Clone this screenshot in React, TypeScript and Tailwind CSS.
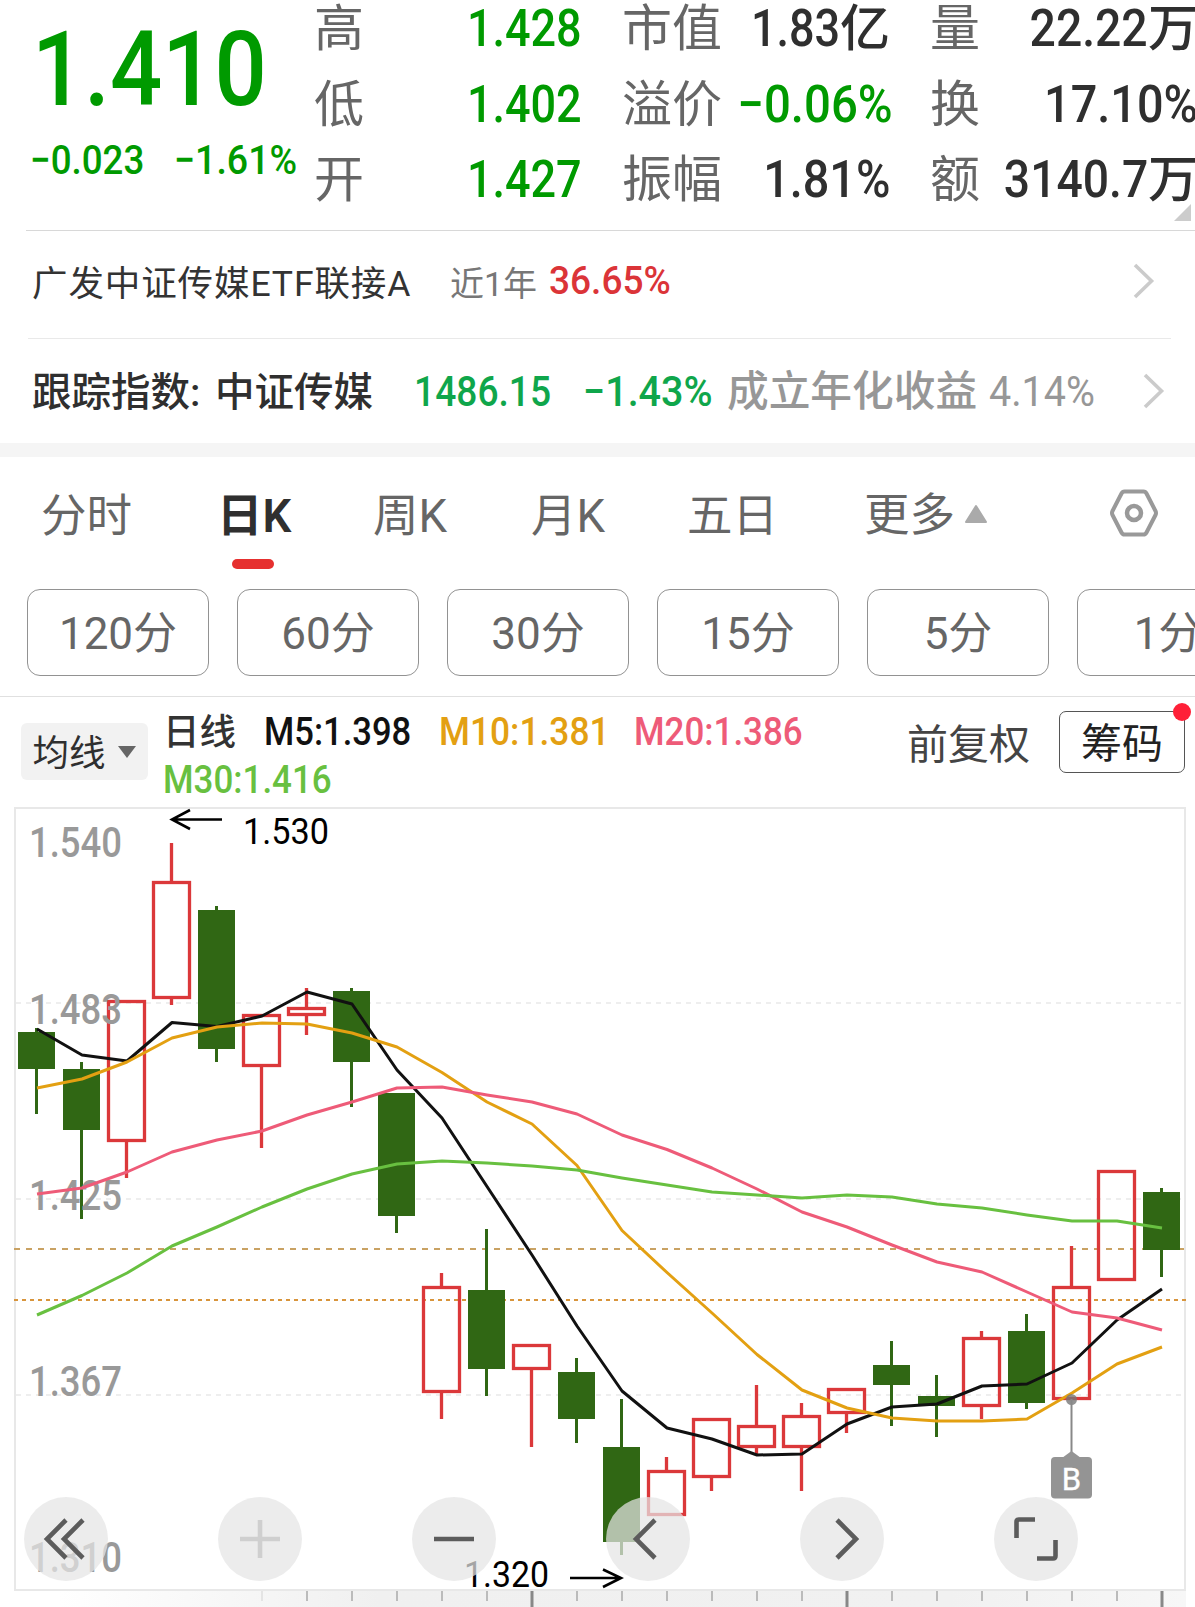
import React from "react";
import { clsx } from "clsx";

const quoteColumns = [
  {
    width: "w-[268px]",
    rows: [
      { label: "高", value: "1.428", color: "text-[#009a00]", scale: "scale-x-[0.865]" },
      { label: "低", value: "1.402", color: "text-[#009a00]", scale: "scale-x-[0.865]" },
      { label: "开", value: "1.427", color: "text-[#009a00]", scale: "scale-x-[0.865]" },
    ],
  },
  {
    width: "w-[268px]",
    rows: [
      { label: "市值", value: "1.83", unit: "亿", color: "text-[#2f2f2f]", scale: "scale-x-[0.865]" },
      { label: "溢价", value: "−0.06%", color: "text-[#009a00]", scale: "scale-x-[0.91]" },
      { label: "振幅", value: "1.81%", color: "text-[#2f2f2f]", scale: "scale-x-[0.9]" },
    ],
  },
  {
    width: "w-[268px]",
    rows: [
      { label: "量", value: "22.22", unit: "万", color: "text-[#2f2f2f]", scale: "scale-x-[0.89]" },
      { label: "换", value: "17.10%", color: "text-[#2f2f2f]", scale: "scale-x-[0.9]" },
      { label: "额", value: "3140.7", unit: "万", color: "text-[#2f2f2f]", scale: "scale-x-[0.89]" },
    ],
  },
];

const tabs = [
  { label: "分时", width: "w-[178px]" },
  { label: "日K", width: "w-[154px]", active: true },
  { label: "周K", width: "w-[158px]" },
  { label: "月K", width: "w-[156px]" },
  { label: "五日", width: "w-[177px]" },
];

const periods = ["120", "60", "30", "15", "5", "1"];

// [up, body top, body bottom, high, low]
const candles: [boolean, number, number, number, number][] = [
  [false, 1032, 1069, 1028, 1114],
  [false, 1069, 1130, 1062, 1219],
  [true, 1000, 1142, 1000, 1178],
  [true, 881, 999, 843, 1005],
  [false, 910, 1049, 906, 1062],
  [true, 1014, 1067, 1014, 1148],
  [true, 1007, 1016, 988, 1035],
  [false, 991, 1062, 988, 1107],
  [false, 1093, 1216, 1093, 1233],
  [true, 1286, 1393, 1273, 1419],
  [false, 1290, 1369, 1229, 1396],
  [true, 1344, 1370, 1344, 1447],
  [false, 1372, 1419, 1358, 1443],
  [false, 1447, 1542, 1399, 1555],
  [true, 1470, 1516, 1457, 1516],
  [true, 1418, 1478, 1418, 1491],
  [true, 1425, 1448, 1385, 1454],
  [true, 1415, 1448, 1403, 1491],
  [true, 1388, 1414, 1388, 1433],
  [false, 1365, 1385, 1341, 1426],
  [false, 1396, 1406, 1375, 1437],
  [true, 1337, 1407, 1331, 1419],
  [false, 1331, 1403, 1314, 1409],
  [true, 1286, 1400, 1246, 1400],
  [true, 1170, 1281, 1170, 1281],
  [false, 1192, 1250, 1188, 1277],
];

const averages = [
  {
    color: "#111111",
    points: [1029, 1055, 1061, 1022.5, 1026.5, 1016, 992, 1004, 1070, 1118, 1186.5, 1255, 1326, 1391, 1428, 1439, 1455, 1454, 1424, 1407, 1404, 1386, 1384, 1363, 1320, 1289],
  },
  {
    color: "#e3a012",
    points: [1088, 1079, 1062, 1038, 1027, 1023, 1024, 1033, 1047, 1072.5, 1102, 1124, 1165.5, 1230.5, 1272.5, 1313, 1354.5, 1390, 1408, 1418, 1421, 1421, 1419, 1393, 1364, 1347],
  },
  {
    color: "#ee5b78",
    points: [1194, 1188, 1172, 1152, 1140, 1131, 1115, 1102, 1088, 1087, 1095, 1102, 1114, 1135, 1149.5, 1168, 1189, 1212, 1227, 1245, 1262, 1272, 1292, 1312, 1318, 1330],
  },
  {
    color: "#68c040",
    points: [1315, 1295.5, 1273, 1246, 1227, 1207, 1189, 1174, 1164, 1161, 1163, 1166, 1170, 1178, 1185, 1192, 1195, 1198, 1195, 1197, 1204, 1208, 1215, 1221, 1221, 1228],
  },
];

const axisLabels = [
  { text: "1.540", y: 857 },
  { text: "1.483", y: 1024 },
  { text: "1.425", y: 1210 },
  { text: "1.367", y: 1396 },
  { text: "1.310", y: 1572 },
];

const candleX = (i: number) => 36.5 + i * 45;

function Num({ className, children }: { className?: string; children: React.ReactNode }) {
  return <span className={clsx("inline-block whitespace-nowrap", className)}>{children}</span>;
}

function Chevron() {
  return (
    <svg width="22" height="36" viewBox="0 0 22 36" fill="none" stroke="#cbcbcb" strokeWidth="3.6">
      <path d="M2 2 L18.5 18 L2 34" />
    </svg>
  );
}

function Quote() {
  return (
    <section className="flex h-[230px]">
      <div className="w-[314px] shrink-0">
        <div className="mt-[18px] h-[104px] pl-[32px] leading-[104px]">
          <Num className="origin-left scale-x-[0.885] text-[104px] font-medium text-[#009a00]">1.410</Num>
        </div>
        <div className="mt-[15px] flex h-[48px] items-center pl-[30px] text-[41px] text-[#009a00]">
          <Num className="w-[144px] origin-left scale-x-[0.895] font-medium">−0.023</Num>
          <Num className="origin-left scale-x-[0.915] font-medium">−1.61%</Num>
        </div>
      </div>
      <div className="mt-[1px] flex gap-[40px]">
        {quoteColumns.map((column, i) => (
          <div key={i} className={clsx("flex shrink-0 flex-col gap-[19.5px]", column.width)}>
            {column.rows.map((row) => (
              <div key={row.label} className="flex h-[56px] items-center justify-between whitespace-nowrap leading-[56px]">
                <span className="text-[50px] text-[#666]">{row.label}</span>
                <span className={clsx("flex items-center", row.color)}>
                  <Num className={clsx("origin-right text-[52px] font-medium", row.scale)}>{row.value}</Num>
                  {row.unit && <span className="text-[50px] font-medium">{row.unit}</span>}
                </span>
              </div>
            ))}
          </div>
        ))}
      </div>
      {/* expand corner */}
      <svg className="absolute left-[1173px] top-[203px]" width="19" height="19" viewBox="0 0 19 19">
        <path d="M18 1 V18 H1 Z" fill="#cccccc" />
      </svg>
    </section>
  );
}

function FundLinks() {
  return (
    <section>
      <div className="ml-[26px] h-px bg-[#d8d8d8]" />
      <div className="flex h-[107px] items-center pb-[7px] pl-[32px]">
        <div className="mt-[7px] w-[418px] whitespace-nowrap text-[35.5px] tracking-[0.9px] text-[#333]">广发中证传媒ETF联接A</div>
        <div className="mt-[7px] w-[99px] whitespace-nowrap text-[34px] text-[#777]">近1年</div>
        <Num className="origin-left scale-x-[0.975] text-[38px] font-medium text-[#db3438]">36.65%</Num>
        <div className="ml-auto mr-[40px]">
          <Chevron />
        </div>
      </div>
      <div className="ml-[28px] mr-[24px] h-px bg-[#e9e9e9]" />
      <div className="flex h-[104px] items-center whitespace-nowrap pl-[32px]">
        <div className="mt-[3px] w-[183px] text-[39.5px] font-medium text-[#2f2f2f]">跟踪指数:</div>
        <div className="mt-[3px] w-[199px] text-[39.5px] font-medium text-[#2f2f2f]">中证传媒</div>
        <Num className="w-[169px] origin-left scale-x-[0.885] text-[42px] font-medium text-[#0fa64b]">1486.15</Num>
        <Num className="w-[144px] origin-left scale-x-[0.94] text-[42px] font-medium text-[#0fa64b]">−1.43%</Num>
        <div className="mt-[3px] w-[262px] text-[41.7px] font-medium text-[#979797]">成立年化收益</div>
        <Num className="origin-left scale-x-[0.94] text-[42px] text-[#979797]">4.14%</Num>
        <div className="ml-auto mr-[30px]">
          <Chevron />
        </div>
      </div>
      <div className="h-[14px] bg-[#f5f5f5]" />
    </section>
  );
}

function Tabs() {
  return (
    <nav className="flex h-[132px] pl-[41px] text-[45.5px] text-[#666]">
      {tabs.map((tab) => (
        <div key={tab.label} className={clsx("shrink-0 pt-[27px]", tab.width)}>
          <div className={clsx("h-[66px] leading-[66px]", tab.active && "-ml-[2px] font-semibold text-[#2f2f2f]")}>{tab.label}</div>
          {tab.active && <div className="ml-[13px] mt-[9px] h-[10px] w-[42px] rounded-full bg-[#e6302f]" />}
        </div>
      ))}
      <div className="flex h-[118px] items-center">
        <span>更多</span>
        <svg className="mb-[5px] ml-[9px]" width="24" height="20" viewBox="0 0 24 20">
          <path d="M12 2 L22 18 H2 Z" fill="#aaa" stroke="#aaa" strokeWidth="2" strokeLinejoin="round" />
        </svg>
      </div>
      <svg className="ml-auto mr-[36px] mt-[31px]" width="50" height="50" viewBox="0 0 50 50" fill="none" stroke="#999" strokeWidth="4" strokeLinejoin="round">
        <path d="M15.5 3.5 H34.5 Q36.5 3.5 37.5 5.5 L46.5 23 Q47.5 25 46.5 27 L37.5 44.5 Q36.5 46.5 34.5 46.5 H15.5 Q13.5 46.5 12.5 44.5 L3.5 27 Q2.5 25 3.5 23 L12.5 5.5 Q13.5 3.5 15.5 3.5 Z" />
        <circle cx="25" cy="25" r="7" strokeWidth="4.5" />
      </svg>
    </nav>
  );
}

function Periods() {
  return (
    <div className="flex h-[107px] gap-[28px] overflow-hidden pl-[27px]">
      {periods.map((period) => (
        <div
          key={period}
          className="flex h-[87px] w-[182px] shrink-0 items-center justify-center rounded-[13px] border border-[#929292] pt-[3px] text-[44px] text-[#666]"
        >
          {period}分
        </div>
      ))}
    </div>
  );
}

function Indicators() {
  return (
    <div className="flex h-[111px] border-t border-[#e0e0e0]">
      <div className="ml-[21px] mt-[26px] flex h-[57px] w-[127px] items-center justify-center gap-[11px] rounded-md bg-[#f2f2f2] text-[36.5px] text-[#2f2f2f]">
        <span className="pt-[5px]">均线</span>
        <svg width="20" height="13" viewBox="0 0 20 13">
          <path d="M1 1 H19 L10 13 Z" fill="#666" />
        </svg>
      </div>
      <div className="ml-[15px] mt-[11px] w-[701px] text-[38px] font-medium">
        <div className="flex h-[48px] items-center whitespace-nowrap">
          <span className="w-[101px] pt-[2px] text-[36.5px] text-[#333]">日线</span>
          <Num className="w-[175px] origin-left scale-x-[0.91] text-[#111]">M5:1.398</Num>
          <Num className="w-[195px] origin-left scale-x-[0.93] text-[#e3a012]">M10:1.381</Num>
          <Num className="origin-left scale-x-[0.92] text-[#ee5b78]">M20:1.386</Num>
        </div>
        <div className="flex h-[48px] items-center">
          <Num className="origin-left scale-x-[0.92] text-[#68c040]">M30:1.416</Num>
        </div>
      </div>
      <div className="ml-[43px] mt-[17px] h-[62px] w-[152px] whitespace-nowrap text-[41px] leading-[62px] text-[#444]">前复权</div>
      <div className="relative mt-[14px] h-[62px] w-[126px] rounded-[7px] border border-[#555] text-center text-[41px] leading-[64px] text-[#222]">
        筹码
        <div className="absolute -right-[7px] -top-[9px] size-[18px] rounded-full bg-[#ff2038]" />
      </div>
    </div>
  );
}

function ChartButton({ cx, children, muted }: { cx: number; children: React.ReactNode; muted?: boolean }) {
  return (
    <g transform={`translate(${cx} 1539)`} fill="none" stroke={muted ? "#cfcfcf" : "#5c5c5c"} strokeWidth="4.6">
      <circle r="42" fill="rgb(229,229,229)" fillOpacity="0.72" stroke="none" />
      {children}
    </g>
  );
}

function Chart() {
  return (
    <svg className="block" width="1195" height="800" viewBox="0 807 1195 800">
      <defs>
        <linearGradient id="ruler" x1="0" x2="1">
          <stop offset="0.05" stopColor="#ffffff" />
          <stop offset="0.32" stopColor="#f0f0f0" />
          <stop offset="0.8" stopColor="#f1f1f1" />
          <stop offset="1" stopColor="#f7f7f7" />
        </linearGradient>
      </defs>
      <rect x="0" y="1591" width="1186" height="16" fill="url(#ruler)" />
      <rect x="15" y="808" width="1170" height="782" fill="none" stroke="#e8e8e8" strokeWidth="2" />

      {[1003, 1199, 1395].map((y) => (
        <line key={y} x1="16" x2="1184" y1={y} y2={y} stroke="#e9e9e9" strokeWidth="1.5" strokeDasharray="5 5" />
      ))}
      <line x1="14" x2="1185" y1="1249" y2="1249" stroke="#c9a263" strokeWidth="1.8" strokeDasharray="6 6" />
      <line x1="14" x2="1187" y1="1300" y2="1300" stroke="#d8953c" strokeWidth="2.2" strokeDasharray="4 4" />

      {/* ruler ticks */}
      {candles.map((_, i) => {
        if (i < 5) return null;
        const major = i === 11 || i === 18 || i === 25;
        return (
          <line
            key={i}
            x1={candleX(i) + 0.5}
            x2={candleX(i) + 0.5}
            y1="1591"
            y2={major ? 1607 : 1601}
            stroke={major ? "#888" : i === 5 ? "#e4e4e4" : "#bbb"}
            strokeWidth={major ? 3 : 2}
          />
        );
      })}

      {candles.map(([up, top, bottom, high, low], i) => {
        const x = candleX(i);
        return up ? (
          <g key={i} stroke="#db383a" strokeWidth="3.3" fill="none">
            <path d={`M${x} ${high} V${top} M${x} ${bottom} V${low}`} />
            <rect x={x - 18} y={top + 1.5} width="36" height={bottom - top - 3} />
          </g>
        ) : (
          <g key={i} fill="#306714">
            <rect x={x - 1.5} y={high} width="3" height={low - high} />
            <rect x={x - 18.5} y={top} width="37" height={bottom - top} />
          </g>
        );
      })}

      {axisLabels.map((label) => (
        <text key={label.text} x="29" y={label.y} textLength="93" lengthAdjust="spacingAndGlyphs" fontFamily="Roboto, sans-serif" fontSize="42" fontWeight="500" fill="#999">
          {label.text}
        </text>
      ))}

      {averages.map((average) => (
        <polyline
          key={average.color}
          points={average.points.map((y, i) => `${candleX(i) + 0.5},${y}`).join(" ")}
          fill="none"
          stroke={average.color}
          strokeWidth="3"
          strokeLinejoin="round"
        />
      ))}

      {/* highest and lowest price */}
      <g fill="none" stroke="#000" strokeWidth="2.6">
        <path d="M222 819.5 H172 M190 810 L172 819.5 L190 829" />
        <path d="M570 1578 H621 M603 1569.5 L621 1578 L603 1587" />
      </g>
      <g fontFamily="Roboto, sans-serif" fontSize="36.5" fill="#000">
        <text x="243" y="843.5" textLength="86" lengthAdjust="spacingAndGlyphs">1.530</text>
        <text x="464" y="1587" textLength="85" lengthAdjust="spacingAndGlyphs">1.320</text>
      </g>

      {/* buy marker */}
      <g>
        <circle cx="1071.5" cy="1399.5" r="5.5" fill="#777" fillOpacity="0.8" />
        <line x1="1071.5" x2="1071.5" y1="1399" y2="1453" stroke="#888" strokeWidth="2" />
        <path d="M1062 1458 L1071.5 1451 L1081 1458 Z" fill="#949494" />
        <rect x="1051" y="1457" width="41" height="41.5" rx="4" fill="#949494" />
        <text x="1071.5" y="1489.5" textAnchor="middle" fontFamily="Roboto, sans-serif" fontSize="31" fill="#fff" stroke="#fff" strokeWidth="0.4">
          B
        </text>
      </g>

      <ChartButton cx={66}>
        <path d="M0 -19 L-19 0 L0 19 M17 -19 L-2 0 L17 19" />
      </ChartButton>
      <ChartButton cx={260} muted>
        <path d="M-20 0 H20 M0 -19 V19" />
      </ChartButton>
      <ChartButton cx={454}>
        <path d="M-20 0 H20" />
      </ChartButton>
      <ChartButton cx={648}>
        <path d="M7 -19 L-12 0 L7 19" />
      </ChartButton>
      <ChartButton cx={842}>
        <path d="M-5 -19 L14 0 L-5 19" />
      </ChartButton>
      <ChartButton cx={1036}>
        <path d="M-19.5 -1 V-17 Q-19.5 -19.5 -17 -19.5 H-1 M19.5 1 V17 Q19.5 19.5 17 19.5 H1" />
      </ChartButton>
    </svg>
  );
}

export default function App() {
  return (
    <div className="relative h-[1607px] w-[1195px] overflow-hidden bg-white font-['Roboto','Noto_Sans_CJK_SC',sans-serif]">
      <Quote />
      <FundLinks />
      <Tabs />
      <Periods />
      <Indicators />
      <Chart />
    </div>
  );
}
